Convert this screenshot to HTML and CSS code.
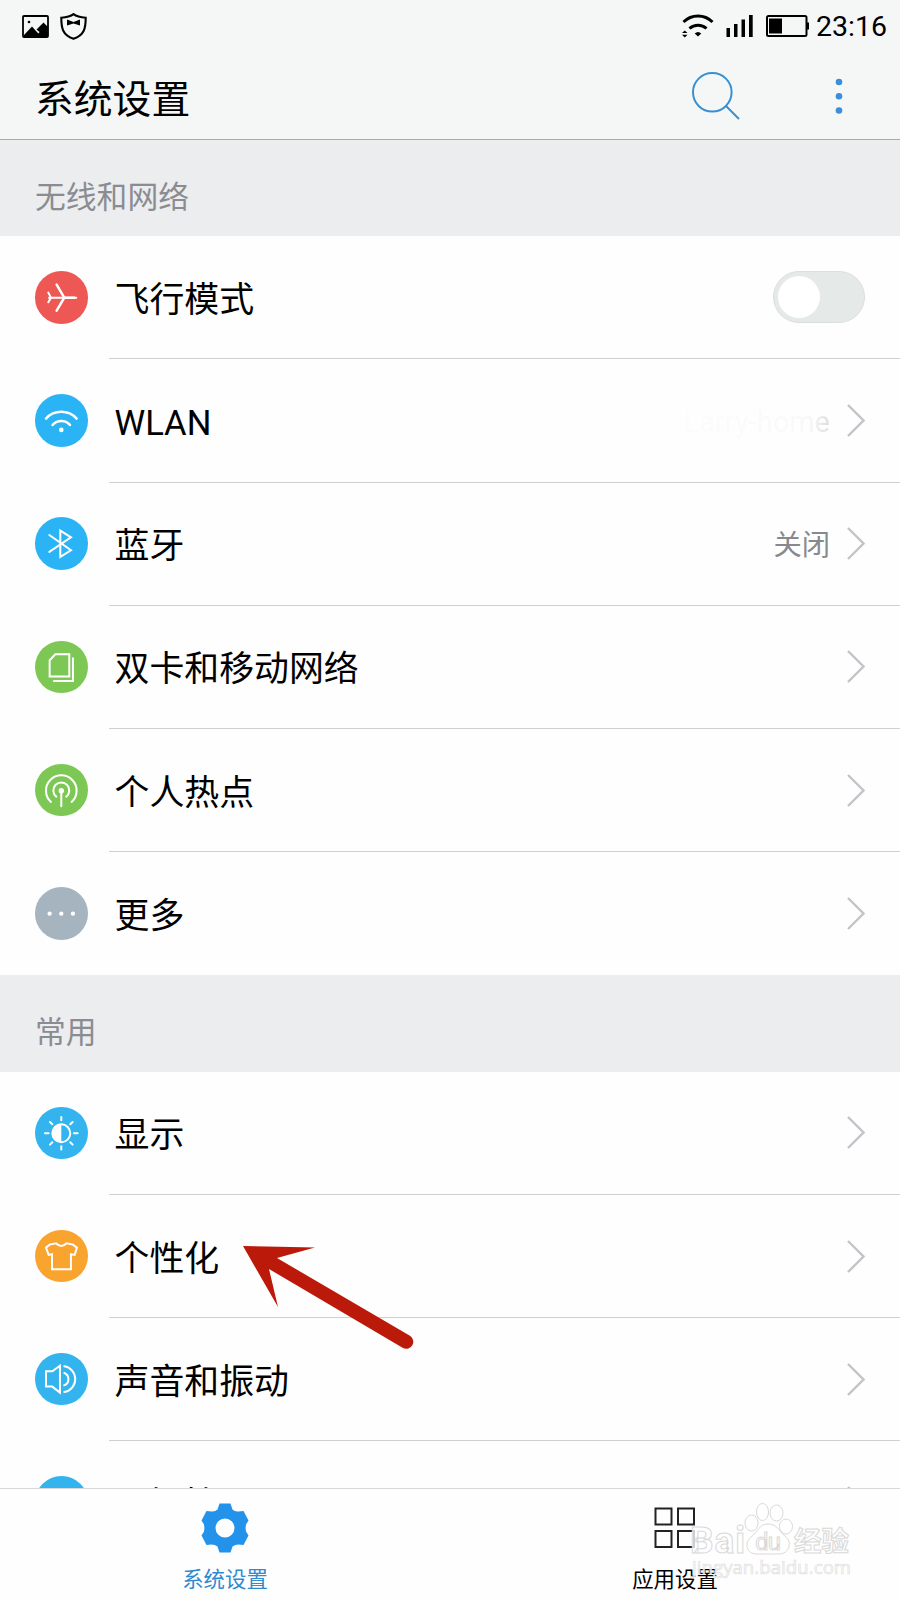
FILE: index.html
```html
<!DOCTYPE html>
<html lang="zh-CN">
<head>
    <meta charset="UTF-8">
    <meta name="viewport" content="width=device-width, initial-scale=1.0">
    <title>系统设置</title>
    <link rel="stylesheet" href="styles.css">
</head>
<body>
    <div class="phone">
        <header>
            <div class="status">
                <svg class="pic" viewBox="0 0 27 23">
                    <rect x="1" y="1" width="25" height="21" rx="1" fill="none" stroke="#000" stroke-width="1.8"/>
                    <circle cx="7" cy="7" r="1.3"/>
                    <path d="M2 20L10 11.500L14 16L16.500 18.500L17.500 17L14.500 14.500L21.500 7.500L26 12V22H2Z"/>
                </svg>
                <svg class="shield" viewBox="0 0 27 27">
                    <path d="M13.500 1.200C10 3.800 6 4.400 1.300 4.800C1.300 15 2.500 22 13.500 25.800C24.500 22 25.700 15 25.700 4.800C21 4.400 17 3.800 13.500 1.200Z" fill="none" stroke="#000" stroke-width="2.100"/>
                    <path d="M7 6.500L13.500 9L20 6.500V12.500L13.500 10.500L7 12.500Z"/>
                </svg>
                <div class="status-right">
                    <svg class="signal" viewBox="0 0 32 24">
                        <path d="M1.500 8A20.500 20.500 0 0 1 30.500 8M7.500 14.500A12.500 12.500 0 0 1 24.500 14.500" fill="none" stroke="#000" stroke-width="3"/>
                        <path d="M12.700 19.500Q16 16.500 19.300 19.500L16 22.500ZM0 19L2.800 16.500L5.500 19ZM0 20.800L2.800 23.500L5.500 20.800Z"/>
                    </svg>
                    <svg class="bars" viewBox="0 0 28 22">
                        <path d="M.5 13H4V22H.5ZM8 9H11.500V22H8ZM15.500 4.500H19V22H15.500ZM23 0H26.700V22H23Z"/>
                    </svg>
                    <svg class="battery" viewBox="0 0 43 22">
                        <rect x="1" y="1" width="39.500" height="20" rx="1.500" fill="none" stroke="#000" stroke-width="2"/>
                        <path d="M3 3.500H16V18.500H3ZM40 7.500H43V14.500H40Z"/>
                    </svg>
                    <span class="time">23:16</span>
                </div>
            </div>
            <div class="title-bar">
                <h1>系统设置</h1>
                <svg class="search" viewBox="0 0 48 48">
                    <circle cx="20.300" cy="20.300" r="19.300"/>
                    <path d="M33.500 33.500L47 47"/>
                </svg>
                <svg class="menu" viewBox="0 0 8 36">
                    <circle cx="4" cy="4" r="3.300"/>
                    <circle cx="4" cy="18.200" r="3.300"/>
                    <circle cx="4" cy="32.500" r="3.300"/>
                </svg>
            </div>
        </header>

        <div class="list">
            <h2>无线和网络</h2>
            <div class="row">
                <svg class="icon red" viewBox="0 0 158 158"><path d="M42 80H124M40 65L48 80L40 94"/><path class="thick" d="M65 41L88 80L65 119M88 80H118"/></svg>
                <div class="item"><span>飞行模式</span><div class="toggle"></div></div>
            </div>
            <div class="row">
                <svg class="icon blue" viewBox="0 0 158 158"><path class="thick" d="M33 74A62 62 0 0 1 125 74M53 93A35 35 0 0 1 105 93"/><circle class="fill" cx="79" cy="108" r="7"/></svg>
                <div class="item"><span class="latin">WLAN</span><em class="ssid">Larry-home</em><svg class="go" viewBox="0 0 18 33"><path d="M1 1L16.500 16.500L1 32"/></svg></div>
            </div>
            <div class="row">
                <svg class="icon blue" viewBox="0 0 158 158"><path d="M43 54L108 100L76 120V41L108 61L43 105"/></svg>
                <div class="item"><span>蓝牙</span><em>关闭</em><svg class="go" viewBox="0 0 18 33"><path d="M1 1L16.500 16.500L1 32"/></svg></div>
            </div>
            <div class="row">
                <svg class="icon green" viewBox="0 0 158 158"><path d="M44 58L61 40H103V107H44ZM114 52V120H57"/></svg>
                <div class="item"><span>双卡和移动网络</span><svg class="go" viewBox="0 0 18 33"><path d="M1 1L16.500 16.500L1 32"/></svg></div>
            </div>
            <div class="row">
                <svg class="icon green" viewBox="0 0 158 158"><path d="M48 114A46 46 0 1 1 110 114M64 98A24 24 0 1 1 94 98M79 80V127"/><circle class="fill" cx="79" cy="80" r="8"/></svg>
                <div class="item"><span>个人热点</span><svg class="go" viewBox="0 0 18 33"><path d="M1 1L16.500 16.500L1 32"/></svg></div>
            </div>
            <div class="row last">
                <svg class="icon gray" viewBox="0 0 158 158"><circle class="fill" cx="44" cy="80" r="6.500"/><circle class="fill" cx="79" cy="80" r="6.500"/><circle class="fill" cx="114" cy="80" r="6.500"/></svg>
                <div class="item"><span>更多</span><svg class="go" viewBox="0 0 18 33"><path d="M1 1L16.500 16.500L1 32"/></svg></div>
            </div>

            <h2>常用</h2>
            <div class="row">
                <svg class="icon sky" viewBox="0 0 158 158"><circle cx="79" cy="79" r="27"/><path class="fill" d="M79 52A27 27 0 0 0 79 106Z"/><path d="M79 30V40M79 118V128M30 79H41M117 79H128M45 45L52 52M106 106L113 113M45 113L52 106M106 52L113 45"/></svg>
                <div class="item"><span>显示</span><svg class="go" viewBox="0 0 18 33"><path d="M1 1L16.500 16.500L1 32"/></svg></div>
            </div>
            <div class="row">
                <svg class="icon orange" viewBox="0 0 158 158"><path d="M33 53L44 44L63 40Q79 56 95 40L114 44L126 53L119 75L108 73V118H51V73L41 75Z"/></svg>
                <div class="item"><span>个性化</span><svg class="go" viewBox="0 0 18 33"><path d="M1 1L16.500 16.500L1 32"/></svg></div>
            </div>
            <div class="row">
                <svg class="icon sky" viewBox="0 0 158 158"><path d="M33 55H52L75 38V119L52 101H33ZM88 60A20 20 0 0 1 88 97M88 40A39 39 0 0 1 88 117"/></svg>
                <div class="item"><span>声音和振动</span><svg class="go" viewBox="0 0 18 33"><path d="M1 1L16.500 16.500L1 32"/></svg></div>
            </div>
            <div class="row">
                <svg class="icon sky" viewBox="0 0 158 158"></svg>
                <div class="item"><span>通知管理</span><svg class="go" viewBox="0 0 18 33"><path d="M1 1L16.500 16.500L1 32"/></svg></div>
            </div>
        </div>

        <nav>
            <div class="tab active">
                <svg viewBox="0 0 48 50">
                    <path fill-rule="evenodd" d="M18.500 0.500H29.500L31.500 6.500Q34 9 37.500 8.500L42.500 8L47.500 17.500L45 21.500Q44.300 25 45 28.500L47.500 32.500L42.500 42L37.500 41.500Q34 41.500 31.500 43.500L29.500 49.500H18.500L16.500 43.500Q14 41.500 10.500 41.500L5.500 42L0.500 32.500L3 28.500Q3.700 25 3 21.500L0.500 17.500L5.500 8L10.500 8.500Q14 9 16.500 6.500ZM24 15.500A9.500 9.500 0 1 0 24 34.500A9.500 9.500 0 1 0 24 15.500Z"/>
                </svg>
                <span>系统设置</span>
            </div>
            <div class="tab">
                <svg viewBox="0 0 48 50">
                    <path class="grid" d="M4.500 5.500H20.500V21.500H4.500ZM27 5.500H43V21.500H27ZM4.500 28H20.500V44H4.500ZM27 28H43V44H27Z"/>
                </svg>
                <span>应用设置</span>
            </div>
        </nav>

        <svg class="arrow" viewBox="0 0 172 104">
            <path d="M0 0L72 1.500L34 12L166.500 89.500A6.700 6.700 0 0 1 160 102L26 23L35 61Z"/>
        </svg>

        <svg class="watermark" viewBox="0 0 170 80">
            <g class="paw">
                <ellipse cx="18.500" cy="21" rx="6.500" ry="8"/>
                <ellipse cx="29.500" cy="10" rx="6" ry="8.500"/>
                <ellipse cx="43.500" cy="11" rx="6.500" ry="8"/>
                <ellipse cx="53" cy="24.500" rx="6.500" ry="7.500"/>
                <path d="M35 22C45 22 46 30 52 34C60 40 56 52 46 52H24C13 52 11 41 18 35C25 30 26 22 35 22Z"/>
            </g>
            <text class="bai" x="-43" y="51" textLength="55">Bai</text>
            <text class="du" x="22" y="48" textLength="26">du</text>
            <text class="jy" x="61" y="49">经验</text>
            <text class="url" x="-41" y="72" textLength="159">jingyan.baidu.com</text>
        </svg>
    </div>
</body>
</html>
```
FILE: styles.css
```css
*{
    margin: 0;
    padding: 0;
    box-sizing: border-box;
}
body{
    background-color: #fefefe;
    font-family: Roboto, "Noto Sans CJK SC", sans-serif;
    color: #000;
}
.phone{
    position: relative;
    display: flex;
    flex-direction: column;
    width: 900px;
    height: 1600px;
    overflow: hidden;
}
header{
    height: 140px;
    background-color: #f5f7f6;
    border-bottom: 1px solid #a9acae;
}
.status{
    display: flex;
    align-items: center;
    height: 52px;
    padding: 0 13px 0 22px;
}
.pic{
    width: 27px;
    height: 23px;
}
.shield{
    width: 27px;
    height: 27px;
    margin-left: 11px;
}
.status-right{
    display: flex;
    align-items: center;
    margin-left: auto;
}
.signal{
    width: 32px;
    height: 24px;
}
.bars{
    width: 28px;
    height: 22px;
    margin-left: 12px;
}
.battery{
    width: 43px;
    height: 22px;
    margin-left: 12px;
}
.time{
    width: 71px;
    padding-top: 1px;
    margin-left: 7px;
    font-size: 28.5px;
    line-height: 51px;
    white-space: nowrap;
}
.title-bar{
    display: flex;
    align-items: center;
    height: 87px;
    padding: 0 57px 0 35px;
}
h1{
    flex: 1;
    padding-top: 8px;
    font-size: 38.8px;
    font-weight: 400;
    line-height: 79px;
}
.search{
    width: 48px;
    height: 48px;
    fill: none;
    stroke: #3a8fd0;
    stroke-width: 2;
}
.menu{
    width: 8px;
    height: 36px;
    margin-left: 95px;
    fill: #3a8fd6;
}
.list{
    flex: 1;
    min-height: 0;
    overflow: hidden;
}
h2{
    height: 96.3px;
    padding: 20px 0 0 35px;
    background-color: #ecedef;
    color: #8b8c92;
    font-size: 30.8px;
    font-weight: 400;
    line-height: 76px;
}
.row{
    display: flex;
    align-items: center;
    height: 123.2px;
    padding-left: 35px;
}
.icon{
    flex: none;
    width: 52.6px;
    height: 52.6px;
    margin: 0 21.4px 1px 0;
    border-radius: 50%;
    fill: none;
    stroke: #fff;
    stroke-width: 6;
    stroke-linecap: round;
}
.icon .thick{
    stroke-width: 7.5;
}
.icon .fill{
    fill: #fff;
    stroke: none;
}
.red{
    background-color: #ed5855;
}
.blue{
    background-color: #2bb4f5;
}
.sky{
    background-color: #33b4ef;
}
.green{
    background-color: #7dc855;
}
.gray{
    background-color: #a5b4be;
}
.orange{
    background-color: #f9a42f;
}
.item{
    display: flex;
    flex: 1;
    align-items: center;
    height: 100%;
    padding: 0 35px 0 5.5px;
    border-bottom: 1px solid #d0d0d2;
    font-size: 34.9px;
}
.last .item{
    border-bottom: none;
}
.item span{
    flex: 1;
    margin-bottom: 1px;
}
.item .latin{
    margin: 4px 0 0;
    font-size: 34.6px;
}
.item em{
    margin: 0 17px 2px 0;
    color: #88898e;
    font-size: 28.3px;
    font-style: normal;
}
.item .ssid{
    margin: 2px 17px 0 0;
    background: linear-gradient(to right, #fcfcfc, #f9f9f9 80%, #f4f4f4 89%, #dcdcde);
    background-clip: text;
    -webkit-background-clip: text;
    color: transparent;
    font-size: 29px;
}
.go{
    width: 18px;
    height: 33px;
    fill: none;
    stroke: #c3c3c8;
    stroke-width: 2.4;
}
.toggle{
    width: 92px;
    height: 52px;
    padding: 4px;
    border: 1px solid #dcdfde;
    border-radius: 26px;
    background-color: #e5e9e8;
}
.toggle::before{
    content: "";
    display: block;
    width: 42px;
    height: 42px;
    border-radius: 50%;
    background-color: #fff;
}
nav{
    display: flex;
    height: 112px;
    border-top: 1px solid #d8d8d8;
    background-color: #fefefe;
}
.tab{
    display: flex;
    flex: 1;
    flex-direction: column;
    align-items: center;
    padding-top: 14px;
    font-size: 21.4px;
    line-height: 30px;
}
.tab svg{
    width: 48px;
    height: 50px;
    margin-bottom: 11.5px;
}
.active{
    color: #2f8bd0;
    fill: #2392ea;
}
.grid{
    fill: none;
    stroke: #222;
    stroke-width: 2;
}
.arrow{
    position: absolute;
    left: 243px;
    top: 1246px;
    width: 172px;
    height: 104px;
    fill: #bb1a0b;
}
/* logo over the tab bar */
.watermark{
    position: absolute;
    left: 733px;
    top: 1502px;
    width: 170px;
    height: 80px;
    overflow: visible;
    fill: rgba(255, 255, 255, .8);
    stroke: #d9d9d9;
    stroke-width: 1;
    font-weight: 700;
}
.bai{
    font-size: 37px;
}
.du{
    font-size: 24px;
    font-weight: 400;
}
.jy{
    font-size: 27.5px;
}
.url{
    font-family: "Open Sans", sans-serif;
    font-size: 18.5px;
    font-weight: 400;
    stroke: #dedede;
    stroke-width: .7;
}
```
